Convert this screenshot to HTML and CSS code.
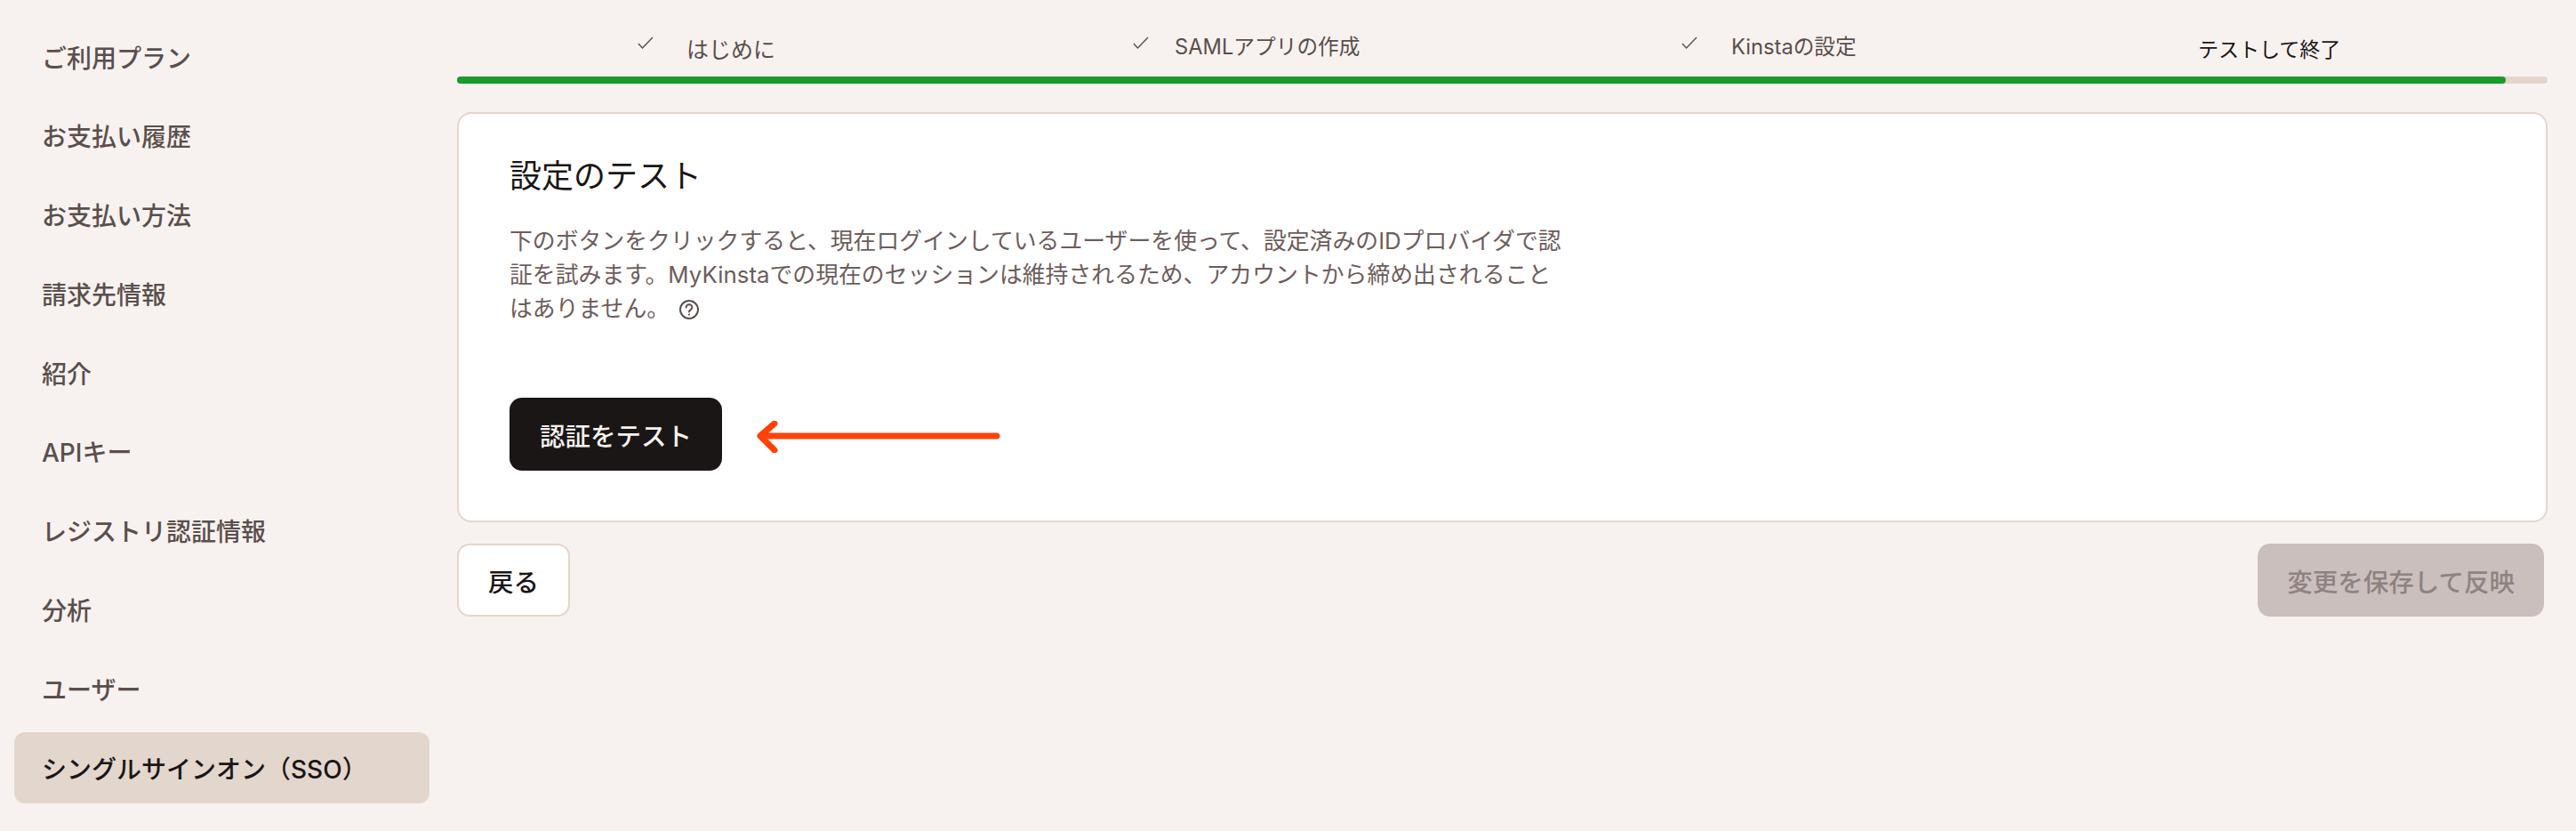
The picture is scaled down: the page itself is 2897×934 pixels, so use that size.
FILE: index.html
```html
<!DOCTYPE html>
<html lang="ja">
<head>
    <meta charset="UTF-8">
    <meta name="viewport" content="width=device-width, initial-scale=1.0">
    <title>シングルサインオン（SSO）</title>
    <link rel="stylesheet" href="styles.css">
</head>
<body>

<div class="page">
    <nav class="sidebar">
        <a class="nav-item">ご利用プラン</a>
        <a class="nav-item">お支払い履歴</a>
        <a class="nav-item">お支払い方法</a>
        <a class="nav-item">請求先情報</a>
        <a class="nav-item">紹介</a>
        <a class="nav-item">APIキー</a>
        <a class="nav-item">レジストリ認証情報</a>
        <a class="nav-item">分析</a>
        <a class="nav-item">ユーザー</a>
        <a class="nav-item active">シングルサインオン（SSO）</a>
    </nav>

    <main class="main">
        <div class="steps">
            <div class="step step-intro">
                <svg class="check" viewBox="0 0 18 14"><path d="M1 8l4.5 5L17 1"/></svg>
                <span>はじめに</span>
            </div>
            <div class="step step-saml">
                <svg class="check" viewBox="0 0 18 14"><path d="M1 8l4.5 5L17 1"/></svg>
                <span>SAMLアプリの作成</span>
            </div>
            <div class="step step-kinsta">
                <svg class="check" viewBox="0 0 18 14"><path d="M1 8l4.5 5L17 1"/></svg>
                <span>Kinstaの設定</span>
            </div>
            <div class="step current">
                <span>テストして終了</span>
            </div>
        </div>

        <div class="progress">
            <div class="progress-fill"></div>
        </div>

        <section class="card">
            <h2>設定のテスト</h2>
            <p>下のボタンをクリックすると、現在ログインしているユーザーを使って、設定済みのIDプロバイダで認証を試みます。MyKinstaでの現在のセッションは維持されるため、アカウントから締め出されることはありません。
                <svg class="help" viewBox="0 0 24 24">
                    <circle cx="12" cy="12" r="10"/>
                    <path d="M8.6 9.6a3.4 3.4 0 0 1 6.8 0c0 2.4-3.4 2.6-3.4 5"/>
                    <path d="M12 17.4v.4"/>
                </svg>
            </p>
            <div class="test-row">
                <button class="btn btn-dark">認証をテスト</button>
                <svg class="arrow" viewBox="0 0 274 36">
                    <path d="M270 17H6"/>
                    <path d="M20 3L4 17l16 16"/>
                </svg>
            </div>
        </section>

        <div class="actions">
            <button class="btn btn-light">戻る</button>
            <button class="btn btn-disabled" disabled>変更を保存して反映</button>
        </div>
    </main>
</div>

</body>
</html>
```

FILE: styles.css
```css
html, body {
    height: 100%;
}
body {
    margin: 0;
    overflow: hidden;
    background-color: #f7f2ef;
    color: #1a1616;
    font-family: Inter, "Noto Sans CJK JP", sans-serif;
}
.page {
    display: flex;
    align-items: flex-start;
    padding-left: 16px;
    padding-right: 32px;
}
.sidebar {
    display: flex;
    flex-direction: column;
    gap: 8.8px;
    width: 467px;
    padding-top: 24px;
    flex-shrink: 0;
}
.nav-item {
    display: flex;
    align-items: center;
    height: 80px;
    padding-left: 31px;
    padding-bottom: 1px;
    box-sizing: border-box;
    border-radius: 12px;
    font-size: 28px;
    font-weight: 500;
    color: #5b4e4d;
}
.nav-item.active {
    background: #e3d6cd;
    color: #1a1616;
}
.main {
    flex: 1;
    min-width: 0;
    margin-left: 31px;
}
.steps {
    display: grid;
    grid-template-columns: 557px 617px 581px 1fr;
    align-items: center;
    height: 86px;
    padding-left: 203px;
    padding-top: 30px;
    padding-bottom: 16px;
    box-sizing: border-box;
    font-size: 25px;
    color: #5b4e4d;
}
.step {
    display: flex;
    align-items: center;
}
.step-intro span {
    margin-left: 37px;
    margin-top: 6px;
}
.step-saml span {
    margin-left: 29px;
    font-size: 23.7px;
}
.step-kinsta span {
    margin-left: 38px;
    font-size: 23.7px;
}
.step.current {
    color: #1a1616;
    font-size: 23px;
}
.step.current span {
    margin-top: 6px;
}
.check {
    width: 18px;
    height: 14px;
    margin-top: -6px;
    fill: none;
    stroke: #5b4e4d;
    stroke-width: 1.4;
}
.progress {
    height: 8px;
    border-radius: 4px;
    background: #e3d6cd;
}
.progress-fill {
    width: 98%;
    height: 100%;
    border-radius: 4px;
    background: #169b2c;
}
.card {
    margin-top: 32px;
    padding: 48px 57px 56px;
    background: #ffffff;
    border: 2px solid #e3d6cd;
    border-radius: 16px;
}
.card h2 {
    margin: 0;
    font-size: 36px;
    font-weight: 400;
    line-height: 44px;
}
.card p {
    width: 1188px;
    margin: 32px 0 0;
    font-size: 25.85px;
    line-height: 38px;
    color: #6d5d5c;
}
.help {
    width: 24px;
    height: 24px;
    margin-left: 3px;
    vertical-align: -4px;
    fill: none;
    stroke: #5b4e4d;
    stroke-width: 2;
    stroke-linecap: round;
}
.test-row {
    display: flex;
    align-items: center;
    gap: 39px;
    margin-top: 81px;
}
.arrow {
    width: 274px;
    height: 36px;
    margin-top: 6px;
    fill: none;
    stroke: #ff4208;
    stroke-width: 7;
    stroke-linecap: round;
    stroke-linejoin: round;
}
.btn {
    height: 82px;
    padding: 0 34px;
    border: none;
    border-radius: 14px;
    font-family: inherit;
    font-size: 28.5px;
    font-weight: 500;
}
.btn-dark {
    background: #1a1616;
    color: #f6f1ee;
}
.btn-light {
    padding: 0 33px;
    background: #ffffff;
    border: 2px solid #e3d6cd;
    color: #1a1616;
}
.btn-disabled {
    padding: 0 33px;
    background: #cabfbc;
    color: #8f8282;
    margin-right: 4px;
}
.actions {
    display: flex;
    justify-content: space-between;
    margin-top: 24px;
}
```
